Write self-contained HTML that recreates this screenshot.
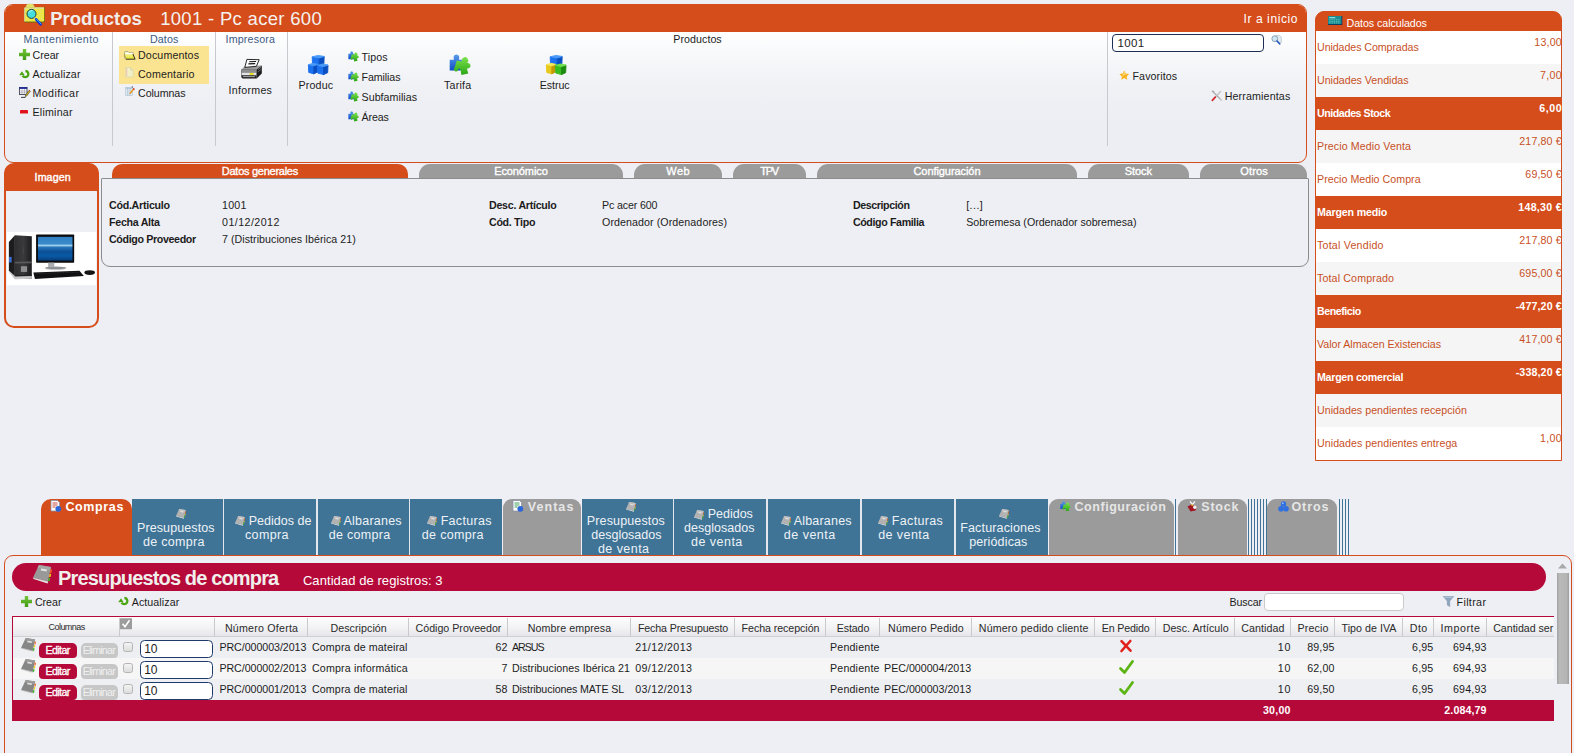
<!DOCTYPE html>
<html lang="es">
<head>
<meta charset="utf-8">
<title>Productos 1001 - Pc acer 600</title>
<style>
*{box-sizing:border-box;margin:0;padding:0}
html,body{width:1574px;height:753px;overflow:hidden;background:#eeeff4;font-family:"Liberation Sans",sans-serif;font-size:12px;color:#1c1c1c}
#root{position:relative;width:1574px;height:753px;overflow:hidden}
.b{position:absolute}
.t{position:absolute;white-space:nowrap}
svg{position:absolute;overflow:visible}
</style>
</head>
<body>
<div id="root">
<div class="b" style="left:4px;top:4px;width:1303px;height:159px;border:1px solid #d64d1c;border-radius:9px 9px 9px 9px;background:linear-gradient(#ffffff 28px,#f7f8fa 52px,#f0f1f5 82px,#edeef3 115px,#edeef3);overflow:hidden"><div class="b" style="left:0;top:0;width:1303px;height:27px;background:#d64d1c"></div></div>
<svg style="left:24px;top:4px" width="22" height="22" viewBox="0 0 22 22"><path d="M2 3.400q.200-3.200 1.800-3.400h4.600q1.400.200 2 3.400z" fill="#e6e45a" stroke="#c9c9b0" stroke-width=".5"/>
<rect x=".400" y="3.200" width="20.500" height="15.200" rx=".800" fill="#6e6d10"/>
<rect x=".400" y="3.200" width="19.700" height="14.400" rx=".800" fill="#eeea3e"/>
<path d="M.800 3.600h19v1h-19z" fill="#d8d8c8"/>
<path d="M.700 4v13.500" stroke="#d0d0c0" stroke-width=".8"/>
<g fill="#d6d39a"><circle cx="13.5" cy="6.500" r=".55"/><circle cx="15.7" cy="6.500" r=".55"/><circle cx="17.9" cy="6.500" r=".55"/><circle cx="14.6" cy="8.600" r=".55"/><circle cx="16.800" cy="8.600" r=".55"/><circle cx="13.5" cy="10.700" r=".55"/><circle cx="15.700" cy="10.700" r=".55"/><circle cx="17.900" cy="10.700" r=".55"/><circle cx="14.600" cy="12.800" r=".55"/><circle cx="16.800" cy="12.800" r=".55"/><circle cx="17.9" cy="14.900" r=".55"/><circle cx="3" cy="15" r=".55"/><circle cx="5.200" cy="16.100" r=".55"/><circle cx="2.2" cy="8" r=".55"/></g>
<circle cx="7.500" cy="9.900" r="4.500" fill="#45dede" stroke="#1d3b3b" stroke-width="1"/>
<path d="M4.600 8.800q1.400-2.600 4-2.300" stroke="#c8f8f8" stroke-width=".9" fill="none"/>
<path d="M10.700 13.600l1.600 1.700" stroke="#c8c8c8" stroke-width="1.600"/>
<path d="M12.200 15.300l4.600 5" stroke="#0b2bd8" stroke-width="2.600" stroke-linecap="round"/>
<path d="M12.600 15.200l4.300 4.700" stroke="#22d0ff" stroke-width=".9" stroke-linecap="round"/></svg>
<div class="t" style="top:8px;font-size:18.5px;line-height:21px;font-weight:bold;color:#f1efec;letter-spacing:0.02px;left:50.17px;">Productos</div>
<div class="t" style="top:8px;font-size:18.5px;line-height:21px;color:#f4f2ef;letter-spacing:0.31px;left:160.17px;">1001 - Pc acer 600</div>
<div class="t" style="top:12px;font-size:12px;line-height:14px;color:#fff;letter-spacing:0.60px;left:1243.46px;">Ir a inicio</div>
<div class="b" style="left:112px;top:32px;width:1px;height:114px;background:#c8c9cf;"></div>
<div class="b" style="left:215px;top:32px;width:1px;height:114px;background:#c8c9cf;"></div>
<div class="b" style="left:287px;top:32px;width:1px;height:114px;background:#c8c9cf;"></div>
<div class="b" style="left:1107px;top:32px;width:1px;height:114px;background:#c8c9cf;"></div>
<div class="t" style="top:33px;font-size:10.67px;line-height:12px;color:#3c5a84;letter-spacing:0.42px;left:23.52px;">Mantenimiento</div>
<svg style="left:19px;top:49px" width="11" height="11" viewBox="0 0 11 11"><defs><linearGradient id="pg" x1="0" y1="0" x2="0" y2="1"><stop offset="0" stop-color="#74c63a"/><stop offset="1" stop-color="#3f9a14"/></linearGradient></defs><path d="M3.800 0h3.400v3.800h3.800v3.400h-3.800v3.800h-3.400v-3.800h-3.800v-3.400h3.800z" fill="url(#pg)"/></svg>
<div class="t" style="top:49px;font-size:10.67px;line-height:12px;left:32.52px;">Crear</div>
<svg style="left:19px;top:68.5px" width="11" height="10.5" viewBox="0 0 11 10.5"><path d="M6.400 2A3.100 3.100 0 1 1 3.600 6.600" fill="none" stroke="#4aa512" stroke-width="2.300"/><path d="M3 2.200l2.500 3.800-5.300.300z" fill="#4aa512"/></svg>
<div class="t" style="top:68px;font-size:10.67px;line-height:12px;letter-spacing:0.13px;left:32.52px;">Actualizar</div>
<svg style="left:19px;top:87px" width="12" height="12" viewBox="0 0 12 12"><rect x=".500" y=".500" width="7.500" height="7" fill="#fff" stroke="#3a3a4a" stroke-width=".9"/><rect x=".300" y=".200" width="7.900" height="1.700" fill="#1c2a9a"/><path d="M.500 4h7.500M.500 5.800h7.500M3 2v5.500M5.500 2v5.500" stroke="#9a9aa8" stroke-width=".6"/><path d="M10.200 3.300l1 1-3.500 4.700-1.500.600.300-1.600z" fill="#e8c81a" stroke="#2a2a2a" stroke-width=".6"/><path d="M10.300 3.200l1 .900" stroke="#c0202a" stroke-width="1"/><path d="M2 10.400h4.500" stroke="#2a2a2a" stroke-width=".9"/></svg>
<div class="t" style="top:87px;font-size:10.67px;line-height:12px;letter-spacing:0.40px;left:32.52px;">Modificar</div>
<svg style="left:20.3px;top:110px" width="8" height="3.6" viewBox="0 0 8 3.6"><rect width="8" height="3.600" rx=".7" fill="#e2121c"/></svg>
<div class="t" style="top:106px;font-size:10.67px;line-height:12px;letter-spacing:0.21px;left:32.52px;">Eliminar</div>
<div class="t" style="top:33px;font-size:10.67px;line-height:12px;color:#3c5a84;letter-spacing:0.15px;left:149.92px;">Datos</div>
<div class="b" style="left:119px;top:46.2px;width:90px;height:37.5px;background:#fbe491;"></div>
<svg style="left:124px;top:50.6px" width="11.5" height="8.8" viewBox="0 0 11.5 8.8"><path d="M.600 7.500v-6.300q0-.700.700-.700h2.600l1 1.100h4.200v2" fill="#f4f2c0" stroke="#8a8a70" stroke-width=".6"/><path d="M1.400 1.900h7.300v2h-7.300z" fill="#fff"/><path d="M.300 3.400h8.700l2 4.700h-9z" fill="#e6e23a"/><path d="M1 4.600h7.600M1.500 5.800h8" stroke="#f6f4a0" stroke-width=".6"/><path d="M1.800 8.200h9.300l-2.100-5" fill="none" stroke="#1a1a1a" stroke-width=".9"/><path d="M.300 3.400l1.700 4.700" stroke="#7a7a30" stroke-width=".6"/></svg>
<div class="t" style="top:49px;font-size:10.67px;line-height:12px;letter-spacing:0.13px;left:138.02px;">Documentos</div>
<svg style="left:125.1px;top:67.2px" width="9" height="10.5" viewBox="0 0 9 10.5"><path d="M.600 .500h5l2.600 2.500v7h-7.600z" fill="#f3efc6" stroke="#dcd8a8" stroke-width=".8"/><path d="M5.600 .500v2.500h2.600" fill="#e6e2b4" stroke="#d2ce9c" stroke-width=".6"/><path d="M1.700 1v8.700" stroke="#ecc0b0" stroke-width=".9"/></svg>
<div class="t" style="top:68px;font-size:10.67px;line-height:12px;letter-spacing:0.15px;left:138.02px;">Comentario</div>
<svg style="left:124.8px;top:86.4px" width="10" height="10" viewBox="0 0 10 10"><rect x=".400" y="1.400" width="7" height="8.200" fill="#dfe9f2" stroke="#b4c4d4" stroke-width=".6"/><rect x=".400" y="1.400" width="7" height="1.600" fill="#b9cfe2"/><path d="M2.700 1.400v8.200M5 1.400v8.200" stroke="#a9bccf" stroke-width=".7"/><path d="M8.500 2.200l1 .900-3.600 4.300-1.400.500.400-1.400z" fill="#f2a722" stroke="#c9801a" stroke-width=".3"/><path d="M8.300 2.400l1.100 1" stroke="#d0202a" stroke-width="1.300"/><circle cx="7.300" cy=".900" r=".6" fill="#333"/></svg>
<div class="t" style="top:87px;font-size:10.67px;line-height:12px;letter-spacing:-0.07px;left:138.02px;">Columnas</div>
<div class="t" style="top:33px;font-size:10.67px;line-height:12px;color:#3c5a84;letter-spacing:0.19px;left:225.52px;">Impresora</div>
<svg style="left:241.1px;top:59px" width="21" height="20" viewBox="0 0 21 20"><path d="M.300 10.500l3.700-3.200 16.700-.800-5.200 4z" fill="#9c9c9c"/>
<path d="M15.500 10.500l5.300-4v8l-5.300 5.200z" fill="#1e1e1e"/>
<path d="M17 10.600l3-2.400M17 13l3-2.600" stroke="#8a8a8a" stroke-width=".7"/>
<path d="M.300 10.500h15.200v9h-13.700q-1.500-.300-1.500-2z" fill="#151515"/>
<path d="M.300 10.500h15.200v3.200h-15.200z" fill="#8e8e8e"/>
<path d="M.600 13.600h14.700v2.700h-14.700z" fill="#e4e4e6"/>
<path d="M8.600 14h4v1.900h-4z" fill="#e6de10"/>
<path d="M1.800 17.700h12.400" stroke="#c8c8c8" stroke-width=".9"/>
<path d="M5.900 .400l12.300.300-2.800 6.600-11.600 1.100z" fill="#fff" stroke="#111" stroke-width=".9"/>
<path d="M8.300 2.700l6.800-.200M7.400 4.900l6.800-.300" stroke="#111" stroke-width="1.100"/></svg>
<div class="t" style="top:84px;font-size:10.67px;line-height:12px;letter-spacing:0.28px;left:228.52px;">Informes</div>
<div class="t" style="top:33px;font-size:10.67px;line-height:12px;letter-spacing:0.05px;left:673.32px;">Productos</div>
<svg style="left:307.6px;top:54.6px" width="21" height="20.5" viewBox="0 0 21 20.5"><path d="M4.20 1.78L11.16 2.94L11.16 11.00L4.56 9.52z" fill="#1c72ee" stroke="#1c72ee" stroke-width=".9" stroke-linejoin="round"/><path d="M11.16 2.94L16.20 1.46L15.84 9.09L11.16 11.00z" fill="#0a4fc2" stroke="#0a4fc2" stroke-width=".9" stroke-linejoin="round"/><path d="M4.68 1.67L10.20 0.40L16.20 1.46L11.16 2.94z" fill="#4a9af8" stroke="#4a9af8" stroke-width=".9" stroke-linejoin="round"/><path d="M0.40 9.68L5.79 10.84L5.79 18.90L0.68 17.42z" fill="#1c72ee" stroke="#1c72ee" stroke-width=".9" stroke-linejoin="round"/><path d="M5.79 10.84L9.70 9.36L9.42 16.99L5.79 18.90z" fill="#0a4fc2" stroke="#0a4fc2" stroke-width=".9" stroke-linejoin="round"/><path d="M0.77 9.57L5.05 8.30L9.70 9.36L5.79 10.84z" fill="#4a9af8" stroke="#4a9af8" stroke-width=".9" stroke-linejoin="round"/><path d="M9.40 10.38L15.55 11.54L15.55 19.60L9.72 18.12z" fill="#1c72ee" stroke="#1c72ee" stroke-width=".9" stroke-linejoin="round"/><path d="M15.55 11.54L20.00 10.06L19.68 17.69L15.55 19.60z" fill="#0a4fc2" stroke="#0a4fc2" stroke-width=".9" stroke-linejoin="round"/><path d="M9.82 10.27L14.70 9.00L20.00 10.06L15.55 11.54z" fill="#4a9af8" stroke="#4a9af8" stroke-width=".9" stroke-linejoin="round"/></svg>
<div class="t" style="top:79px;font-size:10.67px;line-height:12px;letter-spacing:0.16px;left:298.52px;">Produc</div>
<svg style="left:348px;top:51px" width="10.7" height="10.7" viewBox="8.5 6 21.5 21.5"><defs><linearGradient id="pzb" x1="0" y1="0" x2="0" y2="1"><stop offset="0" stop-color="#5a9cec"/><stop offset="1" stop-color="#0f4cc6"/></linearGradient><linearGradient id="pzg" x1="0" y1="0" x2="0" y2="1"><stop offset="0" stop-color="#7ce24a"/><stop offset="1" stop-color="#2aa516"/></linearGradient></defs>
<path d="M9.200 11.700h4.200q-1.300-4.800 2.500-5.100 3.800.300 2.500 5.100h2.900v10.900h-12.100z" fill="url(#pzb)"/>
<path d="M16.300 12.400L21.500 13.600A3.200 3.200 0 1 1 26.800 14.600L27.200 15A2.700 2.700 0 1 1 26.300 20.200L27.800 25.400L21 26.900L20.300 24A2.600 2.600 0 0 0 18 20.600L17.500 22.800A2.400 2.400 0 1 1 14.200 19.200z" fill="url(#pzg)"/></svg>
<div class="t" style="top:51px;font-size:10.67px;line-height:12px;letter-spacing:0.07px;left:361.52px;">Tipos</div>
<svg style="left:348px;top:71px" width="10.7" height="10.7" viewBox="8.5 6 21.5 21.5"><defs><linearGradient id="pzb" x1="0" y1="0" x2="0" y2="1"><stop offset="0" stop-color="#5a9cec"/><stop offset="1" stop-color="#0f4cc6"/></linearGradient><linearGradient id="pzg" x1="0" y1="0" x2="0" y2="1"><stop offset="0" stop-color="#7ce24a"/><stop offset="1" stop-color="#2aa516"/></linearGradient></defs>
<path d="M9.200 11.700h4.200q-1.300-4.800 2.500-5.100 3.800.300 2.500 5.100h2.900v10.900h-12.100z" fill="url(#pzb)"/>
<path d="M16.300 12.400L21.500 13.600A3.200 3.200 0 1 1 26.800 14.600L27.200 15A2.700 2.700 0 1 1 26.300 20.200L27.800 25.400L21 26.900L20.300 24A2.600 2.600 0 0 0 18 20.600L17.500 22.800A2.400 2.400 0 1 1 14.200 19.200z" fill="url(#pzg)"/></svg>
<div class="t" style="top:71px;font-size:10.67px;line-height:12px;letter-spacing:-0.10px;left:361.52px;">Familias</div>
<svg style="left:348px;top:91px" width="10.7" height="10.7" viewBox="8.5 6 21.5 21.5"><defs><linearGradient id="pzb" x1="0" y1="0" x2="0" y2="1"><stop offset="0" stop-color="#5a9cec"/><stop offset="1" stop-color="#0f4cc6"/></linearGradient><linearGradient id="pzg" x1="0" y1="0" x2="0" y2="1"><stop offset="0" stop-color="#7ce24a"/><stop offset="1" stop-color="#2aa516"/></linearGradient></defs>
<path d="M9.200 11.700h4.200q-1.300-4.800 2.500-5.100 3.800.300 2.500 5.100h2.900v10.900h-12.100z" fill="url(#pzb)"/>
<path d="M16.300 12.400L21.500 13.600A3.200 3.200 0 1 1 26.800 14.600L27.200 15A2.700 2.700 0 1 1 26.300 20.200L27.800 25.400L21 26.900L20.300 24A2.600 2.600 0 0 0 18 20.600L17.500 22.800A2.400 2.400 0 1 1 14.200 19.200z" fill="url(#pzg)"/></svg>
<div class="t" style="top:91px;font-size:10.67px;line-height:12px;letter-spacing:0.04px;left:361.52px;">Subfamilias</div>
<svg style="left:348px;top:111px" width="10.7" height="10.7" viewBox="8.5 6 21.5 21.5"><defs><linearGradient id="pzb" x1="0" y1="0" x2="0" y2="1"><stop offset="0" stop-color="#5a9cec"/><stop offset="1" stop-color="#0f4cc6"/></linearGradient><linearGradient id="pzg" x1="0" y1="0" x2="0" y2="1"><stop offset="0" stop-color="#7ce24a"/><stop offset="1" stop-color="#2aa516"/></linearGradient></defs>
<path d="M9.200 11.700h4.200q-1.300-4.800 2.500-5.100 3.800.300 2.500 5.100h2.900v10.900h-12.100z" fill="url(#pzb)"/>
<path d="M16.300 12.400L21.500 13.600A3.200 3.200 0 1 1 26.800 14.600L27.200 15A2.700 2.700 0 1 1 26.300 20.200L27.800 25.400L21 26.900L20.300 24A2.600 2.600 0 0 0 18 20.600L17.500 22.800A2.400 2.400 0 1 1 14.200 19.200z" fill="url(#pzg)"/></svg>
<div class="t" style="top:111px;font-size:10.67px;line-height:12px;letter-spacing:-0.10px;left:361.52px;">Áreas</div>
<svg style="left:448.5px;top:54px" width="21.5" height="21.5" viewBox="8.5 6 21.5 21.5"><defs><linearGradient id="pzb" x1="0" y1="0" x2="0" y2="1"><stop offset="0" stop-color="#5a9cec"/><stop offset="1" stop-color="#0f4cc6"/></linearGradient><linearGradient id="pzg" x1="0" y1="0" x2="0" y2="1"><stop offset="0" stop-color="#7ce24a"/><stop offset="1" stop-color="#2aa516"/></linearGradient></defs>
<path d="M9.200 11.700h4.200q-1.300-4.800 2.500-5.100 3.800.300 2.500 5.100h2.900v10.900h-12.100z" fill="url(#pzb)"/>
<path d="M16.300 12.400L21.500 13.600A3.200 3.200 0 1 1 26.800 14.600L27.200 15A2.700 2.700 0 1 1 26.300 20.200L27.800 25.400L21 26.900L20.300 24A2.600 2.600 0 0 0 18 20.600L17.500 22.800A2.400 2.400 0 1 1 14.200 19.200z" fill="url(#pzg)"/></svg>
<div class="t" style="top:79px;font-size:10.67px;line-height:12px;letter-spacing:0.26px;left:443.92px;">Tarifa</div>
<svg style="left:546.2px;top:54.6px" width="21" height="20.5" viewBox="0 0 21 20.5"><path d="M4.20 1.78L11.16 2.94L11.16 11.00L4.56 9.52z" fill="#1c72ee" stroke="#1c72ee" stroke-width=".9" stroke-linejoin="round"/><path d="M11.16 2.94L16.20 1.46L15.84 9.09L11.16 11.00z" fill="#0a4fc2" stroke="#0a4fc2" stroke-width=".9" stroke-linejoin="round"/><path d="M4.68 1.67L10.20 0.40L16.20 1.46L11.16 2.94z" fill="#4a9af8" stroke="#4a9af8" stroke-width=".9" stroke-linejoin="round"/><path d="M0.40 9.68L5.79 10.84L5.79 18.90L0.68 17.42z" fill="#e8c81c" stroke="#e8c81c" stroke-width=".9" stroke-linejoin="round"/><path d="M5.79 10.84L9.70 9.36L9.42 16.99L5.79 18.90z" fill="#c49808" stroke="#c49808" stroke-width=".9" stroke-linejoin="round"/><path d="M0.77 9.57L5.05 8.30L9.70 9.36L5.79 10.84z" fill="#f6e85a" stroke="#f6e85a" stroke-width=".9" stroke-linejoin="round"/><path d="M9.40 10.38L15.55 11.54L15.55 19.60L9.72 18.12z" fill="#38bc20" stroke="#38bc20" stroke-width=".9" stroke-linejoin="round"/><path d="M15.55 11.54L20.00 10.06L19.68 17.69L15.55 19.60z" fill="#1c8a10" stroke="#1c8a10" stroke-width=".9" stroke-linejoin="round"/><path d="M9.82 10.27L14.70 9.00L20.00 10.06L15.55 11.54z" fill="#6fe04a" stroke="#6fe04a" stroke-width=".9" stroke-linejoin="round"/></svg>
<div class="t" style="top:79px;font-size:10.67px;line-height:12px;letter-spacing:-0.05px;left:539.72px;">Estruc</div>
<div class="b" style="left:1112px;top:33.5px;width:152px;height:18.5px;border:1.5px solid #1d2f55;border-radius:4px;background:#fff"></div>
<div class="t" style="top:37px;font-size:11.5px;line-height:12px;letter-spacing:0.35px;left:1117.48px;">1001</div>
<svg style="left:1271.3px;top:34.6px" width="11" height="10" viewBox="0 0 11 10"><path d="M4.500 .400h4l1.800 1.800v5.300h-3z" fill="#e4ebf0" stroke="#a9b6c0" stroke-width=".6"/><circle cx="3.800" cy="3.700" r="2.900" fill="#cfe6f2" stroke="#7f9aae" stroke-width=".9"/><path d="M6 6l2.800 3" stroke="#2456c0" stroke-width="1.600" stroke-linecap="round"/></svg>
<svg style="left:1119.2px;top:69.8px" width="10.5" height="10" viewBox="0 0 12 11"><path d="M6 .300l1.700 3.600 3.900.500-2.900 2.700.800 3.900-3.500-2-3.500 2 .800-3.900-2.900-2.700 3.900-.500z" fill="#f9b21a"/><path d="M6 1.500l1 2.600 2.400.400-3.400.600-2.600 3z" fill="#fde9a8" opacity=".8"/></svg>
<div class="t" style="top:70px;font-size:10.67px;line-height:12px;letter-spacing:0.09px;left:1132.52px;">Favoritos</div>
<svg style="left:1211.3px;top:89.5px" width="11" height="11" viewBox="0 0 11 11"><path d="M1.800 1.600l7.800 7.800" stroke="#a4a4a4" stroke-width="1.300" stroke-linecap="round"/><path d="M10 1.200l-6 6.300" stroke="#bdbdbd" stroke-width="1.200"/><path d="M4.300 7.200l-3 3.200" stroke="#d4262e" stroke-width="1.700" stroke-linecap="round"/><path d="M.800 1.200q1.600-.900 2.400.800" fill="none" stroke="#9a9a9a" stroke-width=".9"/><path d="M9.300 9l1 1.200" stroke="#c8c8c8" stroke-width="1.600" stroke-linecap="round"/></svg>
<div class="t" style="top:90px;font-size:10.67px;line-height:12px;letter-spacing:0.14px;left:1224.72px;">Herramientas</div>
<div class="b" style="left:4px;top:163px;width:95.200px;height:165px;border:2.100px solid #d64d1c;border-radius:10px;background:linear-gradient(#d64d1c 25.900px,#eeeff4 25.900px);background-clip:border-box"></div>
<div class="t" style="top:171px;font-size:10.67px;line-height:12px;color:#fff;letter-spacing:0.10px;left:-447.35px;width:1000px;text-align:center;-webkit-text-stroke:.4px #fff;">Imagen</div>
<svg style="left:6.970px;top:231.700px" width="89.200" height="53.250" viewBox="75 72 960 573">
<defs><linearGradient id="scr" x1="0" y1="0" x2="0" y2="1"><stop offset="0" stop-color="#2f7fc2"/><stop offset=".3" stop-color="#3a8bcb"/><stop offset=".36" stop-color="#a8d6f0"/><stop offset=".43" stop-color="#2c78bd"/><stop offset=".62" stop-color="#0b4f96"/><stop offset=".8" stop-color="#0a5aa6"/><stop offset="1" stop-color="#063c78"/></linearGradient>
<linearGradient id="twr" x1="0" y1="0" x2="1" y2="0"><stop offset="0" stop-color="#2e2e30"/><stop offset=".5" stop-color="#3a3a3d"/><stop offset="1" stop-color="#1b1b1d"/></linearGradient></defs>
<rect x="75" y="72" width="960" height="573" fill="#fff"/>
<path d="M95 180L160 108V578L95 492z" fill="#1c1c1e"/>
<path d="M160 108L342 118V572L160 578z" fill="url(#twr)"/>
<path d="M97 340h28v60h-28z" fill="#3b6fd6"/>
<path d="M160 392L342 390V408L160 412z" fill="#5a5a5e"/>
<path d="M225 440h66v62h-66z" fill="#8d8d90"/>
<path d="M250 235v70" stroke="#555" stroke-width="5"/>
<path d="M160 545L342 540V572L160 582L98 500V488z" fill="#d8d8da" opacity=".9"/>
<path d="M160 535L342 530V545L160 552z" fill="#222"/>
<rect x="388" y="100" width="410" height="302" rx="8" fill="#0c0c0e"/>
<rect x="408" y="124" width="372" height="256" fill="url(#scr)"/>
<path d="M518 402h66v46h-66z" fill="#a9acb0"/>
<ellipse cx="598" cy="462" rx="118" ry="19" fill="#c2c5c8"/>
<ellipse cx="598" cy="458" rx="110" ry="12" fill="#8e9195"/>
<path d="M358 507L855 490L902 545L376 577z" fill="#111113"/>
<path d="M390 520L850 504" stroke="#333" stroke-width="8" stroke-dasharray="10 6"/>
<ellipse cx="965" cy="509" rx="57" ry="25" fill="#151517"/>
</svg>
<div class="b" style="left:112px;top:163.7px;width:296px;height:14.8px;background:#d64d1c;border-radius:10px 10px 0 0;"></div>
<div class="t" style="top:165px;font-size:11px;line-height:12px;color:#fff;letter-spacing:-0.27px;left:-240.13px;width:1000px;text-align:center;-webkit-text-stroke:.35px #fff;">Datos generales</div>
<div class="b" style="left:419px;top:163.7px;width:204px;height:14.8px;background:#9b9b9b;border-radius:11px 11px 0 0;"></div>
<div class="t" style="top:165px;font-size:11px;line-height:12px;color:#fff;letter-spacing:-0.10px;left:20.95px;width:1000px;text-align:center;-webkit-text-stroke:.35px #fff;">Económico</div>
<div class="b" style="left:634px;top:163.7px;width:88px;height:14.8px;background:#9b9b9b;border-radius:11px 11px 0 0;"></div>
<div class="t" style="top:165px;font-size:11px;line-height:12px;color:#fff;letter-spacing:0.48px;left:178.24px;width:1000px;text-align:center;-webkit-text-stroke:.35px #fff;">Web</div>
<div class="b" style="left:733px;top:163.7px;width:73px;height:14.8px;background:#9b9b9b;border-radius:11px 11px 0 0;"></div>
<div class="t" style="top:165px;font-size:11px;line-height:12px;color:#fff;letter-spacing:-1.21px;left:269.1px;width:1000px;text-align:center;-webkit-text-stroke:.35px #fff;">TPV</div>
<div class="b" style="left:817px;top:163.7px;width:260px;height:14.8px;background:#9b9b9b;border-radius:11px 11px 0 0;"></div>
<div class="t" style="top:165px;font-size:11px;line-height:12px;color:#fff;letter-spacing:-0.07px;left:446.96px;width:1000px;text-align:center;-webkit-text-stroke:.35px #fff;">Configuración</div>
<div class="b" style="left:1088px;top:163.7px;width:101px;height:14.8px;background:#9b9b9b;border-radius:11px 11px 0 0;"></div>
<div class="t" style="top:165px;font-size:11px;line-height:12px;color:#fff;letter-spacing:-0.06px;left:638.37px;width:1000px;text-align:center;-webkit-text-stroke:.35px #fff;">Stock</div>
<div class="b" style="left:1199.5px;top:163.7px;width:107.5px;height:14.8px;background:#9b9b9b;border-radius:11px 11px 0 0;"></div>
<div class="t" style="top:165px;font-size:11px;line-height:12px;color:#fff;letter-spacing:0.10px;left:754.05px;width:1000px;text-align:center;-webkit-text-stroke:.35px #fff;">Otros</div>
<div class="b" style="left:101px;top:178px;width:1208px;height:88.500px;border:1px solid #8c8c8c;border-radius:1px 1px 9px 9px"></div>
<div class="t" style="top:199px;font-size:10.67px;line-height:12px;font-weight:bold;letter-spacing:-0.27px;left:109.02px;">Cód.Articulo</div>
<div class="t" style="top:199px;font-size:10.67px;line-height:12px;letter-spacing:0.25px;left:222.02px;">1001</div>
<div class="t" style="top:216px;font-size:10.67px;line-height:12px;font-weight:bold;letter-spacing:-0.28px;left:109.02px;">Fecha Alta</div>
<div class="t" style="top:216px;font-size:10.67px;line-height:12px;letter-spacing:0.44px;left:222.02px;">01/12/2012</div>
<div class="t" style="top:233px;font-size:10.67px;line-height:12px;font-weight:bold;letter-spacing:-0.35px;left:109.02px;">Código Proveedor</div>
<div class="t" style="top:233px;font-size:10.67px;line-height:12px;letter-spacing:0.04px;left:222.02px;">7 (Distribuciones Ibérica 21)</div>
<div class="t" style="top:199px;font-size:10.67px;line-height:12px;font-weight:bold;letter-spacing:-0.27px;left:489.02px;">Desc. Artículo</div>
<div class="t" style="top:199px;font-size:10.67px;line-height:12px;letter-spacing:-0.14px;left:602.02px;">Pc acer 600</div>
<div class="t" style="top:216px;font-size:10.67px;line-height:12px;font-weight:bold;letter-spacing:-0.31px;left:489.02px;">Cód. Tipo</div>
<div class="t" style="top:216px;font-size:10.67px;line-height:12px;letter-spacing:0.08px;left:602.02px;">Ordenador (Ordenadores)</div>
<div class="t" style="top:199px;font-size:10.67px;line-height:12px;font-weight:bold;letter-spacing:-0.40px;left:852.92px;">Descripción</div>
<div class="t" style="top:199px;font-size:10.67px;line-height:12px;letter-spacing:0.44px;left:966.22px;">[...]</div>
<div class="t" style="top:216px;font-size:10.67px;line-height:12px;font-weight:bold;letter-spacing:-0.37px;left:852.92px;">Código Familia</div>
<div class="t" style="top:216px;font-size:10.67px;line-height:12px;letter-spacing:-0.03px;left:966.22px;">Sobremesa (Ordenador sobremesa)</div>
<div class="b" style="left:1315px;top:11px;width:247px;height:450px;border:1px solid #d64d1c;border-radius:9px 9px 0 0;background:#d64d1c;overflow:hidden"><div class="b" style="left:0;top:18.7px;width:245px;height:33.3px;background:#ffffff"></div><div class="b" style="left:0;top:51.7px;width:245px;height:33.3px;background:#f5f5f5"></div><div class="b" style="left:0;top:84.7px;width:245px;height:33.3px;background:#d64d1c"></div><div class="b" style="left:0;top:117.7px;width:245px;height:33.3px;background:#f5f5f5"></div><div class="b" style="left:0;top:150.7px;width:245px;height:33.3px;background:#ffffff"></div><div class="b" style="left:0;top:183.7px;width:245px;height:33.3px;background:#d64d1c"></div><div class="b" style="left:0;top:216.7px;width:245px;height:33.3px;background:#ffffff"></div><div class="b" style="left:0;top:249.7px;width:245px;height:33.3px;background:#f5f5f5"></div><div class="b" style="left:0;top:282.7px;width:245px;height:33.3px;background:#d64d1c"></div><div class="b" style="left:0;top:315.7px;width:245px;height:33.3px;background:#f5f5f5"></div><div class="b" style="left:0;top:348.7px;width:245px;height:33.3px;background:#d64d1c"></div><div class="b" style="left:0;top:381.7px;width:245px;height:33.3px;background:#f5f5f5"></div><div class="b" style="left:0;top:414.7px;width:245px;height:33.3px;background:#ffffff"></div></div>
<svg style="left:1327.7px;top:15.8px" width="14.3" height="9" viewBox="0 0 14.3 9"><rect width="14.300" height="9" fill="#0c2a5a"/><rect width="13.500" height="8.200" fill="#1b8c92"/><rect x="1.300" y="1" width="6" height="1.300" fill="#8fdcd6"/><path d="M1.300 3.700h11M1.300 5.300h11M1.300 6.900h11" stroke="#6cc8c4" stroke-width=".8" stroke-dasharray="1.400 .8"/></svg>
<div class="t" style="top:17px;font-size:10.67px;line-height:12px;color:#fff;letter-spacing:-0.05px;left:1346.52px;">Datos calculados</div>
<div class="t" style="top:41px;font-size:10.67px;line-height:12px;color:#c8501f;letter-spacing:-0.08px;left:1317.02px;">Unidades Compradas</div>
<div class="t" style="top:36px;font-size:10.67px;line-height:12px;color:#c8501f;letter-spacing:0.17px;right:12.15px;">13,00</div>
<div class="t" style="top:74px;font-size:10.67px;line-height:12px;color:#c8501f;letter-spacing:-0.02px;left:1317.02px;">Unidades Vendidas</div>
<div class="t" style="top:69px;font-size:10.67px;line-height:12px;color:#c8501f;letter-spacing:0.30px;right:12.02px;">7,00</div>
<div class="t" style="top:107px;font-size:10.67px;line-height:12px;font-weight:bold;color:#fff;letter-spacing:-0.49px;left:1317.02px;">Unidades Stock</div>
<div class="t" style="top:102px;font-size:10.67px;line-height:12px;font-weight:bold;color:#fff;letter-spacing:0.57px;right:11.75px;">6,00</div>
<div class="t" style="top:140px;font-size:10.67px;line-height:12px;color:#c8501f;letter-spacing:0.09px;left:1317.02px;">Precio Medio Venta</div>
<div class="t" style="top:135px;font-size:10.67px;line-height:12px;color:#c8501f;letter-spacing:0.13px;right:12.19px;">217,80 €</div>
<div class="t" style="top:173px;font-size:10.67px;line-height:12px;color:#c8501f;letter-spacing:0.03px;left:1317.02px;">Precio Medio Compra</div>
<div class="t" style="top:168px;font-size:10.67px;line-height:12px;color:#c8501f;letter-spacing:0.13px;right:12.19px;">69,50 €</div>
<div class="t" style="top:206px;font-size:10.67px;line-height:12px;font-weight:bold;color:#fff;letter-spacing:-0.17px;left:1317.02px;">Margen medio</div>
<div class="t" style="top:201px;font-size:10.67px;line-height:12px;font-weight:bold;color:#fff;letter-spacing:0.28px;right:12.04px;">148,30 €</div>
<div class="t" style="top:239px;font-size:10.67px;line-height:12px;color:#c8501f;letter-spacing:0.21px;left:1317.02px;">Total Vendido</div>
<div class="t" style="top:234px;font-size:10.67px;line-height:12px;color:#c8501f;letter-spacing:0.13px;right:12.19px;">217,80 €</div>
<div class="t" style="top:272px;font-size:10.67px;line-height:12px;color:#c8501f;letter-spacing:0.13px;left:1317.02px;">Total Comprado</div>
<div class="t" style="top:267px;font-size:10.67px;line-height:12px;color:#c8501f;letter-spacing:0.13px;right:12.19px;">695,00 €</div>
<div class="t" style="top:305px;font-size:10.67px;line-height:12px;font-weight:bold;color:#fff;letter-spacing:-0.46px;left:1317.02px;">Beneficio</div>
<div class="t" style="top:300px;font-size:10.67px;line-height:12px;font-weight:bold;color:#fff;letter-spacing:0.12px;right:12.2px;">-477,20 €</div>
<div class="t" style="top:338px;font-size:10.67px;line-height:12px;color:#c8501f;letter-spacing:-0.03px;left:1317.02px;">Valor Almacen Existencias</div>
<div class="t" style="top:333px;font-size:10.67px;line-height:12px;color:#c8501f;letter-spacing:0.13px;right:12.19px;">417,00 €</div>
<div class="t" style="top:371px;font-size:10.67px;line-height:12px;font-weight:bold;color:#fff;letter-spacing:-0.28px;left:1317.02px;">Margen comercial</div>
<div class="t" style="top:366px;font-size:10.67px;line-height:12px;font-weight:bold;color:#fff;letter-spacing:0.12px;right:12.2px;">-338,20 €</div>
<div class="t" style="top:404px;font-size:10.67px;line-height:12px;color:#c8501f;letter-spacing:0.02px;left:1317.02px;">Unidades pendientes recepción</div>
<div class="t" style="top:437px;font-size:10.67px;line-height:12px;color:#c8501f;letter-spacing:0.04px;left:1317.02px;">Unidades pendientes entrega</div>
<div class="t" style="top:432px;font-size:10.67px;line-height:12px;color:#c8501f;letter-spacing:0.30px;right:12.02px;">1,00</div>
<div class="b" style="left:4px;top:555px;width:1568px;height:230px;border:1px solid #d64d1c;border-radius:9px 9px 0 0"></div>
<div class="b" style="left:131.6px;top:499px;width:370.20000000000005px;height:56px;background:#3f7496;"></div>
<div class="b" style="left:582px;top:499px;width:465.70000000000005px;height:56px;background:#3f7496;"></div>
<div class="b" style="left:222.6px;top:499px;width:1.7px;height:56px;background:#e3e6ec;"></div>
<div class="b" style="left:315.9px;top:499px;width:1.7px;height:56px;background:#e3e6ec;"></div>
<div class="b" style="left:408.8px;top:499px;width:1.7px;height:56px;background:#e3e6ec;"></div>
<div class="b" style="left:672.7px;top:499px;width:1.7px;height:56px;background:#e3e6ec;"></div>
<div class="b" style="left:766px;top:499px;width:1.7px;height:56px;background:#e3e6ec;"></div>
<div class="b" style="left:860px;top:499px;width:1.7px;height:56px;background:#e3e6ec;"></div>
<div class="b" style="left:954.4px;top:499px;width:1.7px;height:56px;background:#e3e6ec;"></div>
<div class="b" style="left:41px;top:499px;width:90.6px;height:56px;background:#d64d1c;border-radius:10px 10px 0 0;"></div>
<div class="b" style="left:503.3px;top:499px;width:78.2px;height:56px;background:#9b9b9b;border-radius:9px 9px 0 0;"></div>
<div class="b" style="left:1049.4px;top:499px;width:124.8px;height:56px;background:#9b9b9b;border-radius:9px 9px 0 0;"></div>
<div class="b" style="left:1175.4px;top:499px;width:1px;height:56px;background:#3f7496;"></div>
<div class="b" style="left:1177.5px;top:499px;width:69.1px;height:56px;background:#9b9b9b;border-radius:9px 9px 0 0;"></div>
<div class="b" style="left:1247.9px;top:499px;width:1.1px;height:56px;background:#3f7496;"></div>
<div class="b" style="left:1251px;top:499px;width:1.1px;height:56px;background:#3f7496;"></div>
<div class="b" style="left:1254px;top:499px;width:1.1px;height:56px;background:#3f7496;"></div>
<div class="b" style="left:1256.9px;top:499px;width:1.1px;height:56px;background:#3f7496;"></div>
<div class="b" style="left:1259.8px;top:499px;width:1.1px;height:56px;background:#3f7496;"></div>
<div class="b" style="left:1262.8px;top:499px;width:1.1px;height:56px;background:#3f7496;"></div>
<div class="b" style="left:1265.6px;top:499px;width:1.1px;height:56px;background:#3f7496;"></div>
<div class="b" style="left:1267.4px;top:499px;width:69.9px;height:56px;background:#9b9b9b;border-radius:9px 9px 0 0;"></div>
<div class="b" style="left:1338.8px;top:499px;width:1.1px;height:56px;background:#3f7496;"></div>
<div class="b" style="left:1341.8px;top:499px;width:1.1px;height:56px;background:#3f7496;"></div>
<div class="b" style="left:1344.8px;top:499px;width:1.1px;height:56px;background:#3f7496;"></div>
<div class="b" style="left:1347.6px;top:499px;width:1.8px;height:56px;background:#3f7496;"></div>
<svg style="left:50.2px;top:500px" width="12" height="12" viewBox="0 0 12 12"><path d="M1 .500h6.500l2 2v8.500h-8.500z" fill="#fff" stroke="#8c93a8" stroke-width=".8"/><path d="M2.500 3h5M2.500 5h5M2.500 7h3" stroke="#c0392b" stroke-width=".9"/><circle cx="8.300" cy="8.800" r="2.900" fill="#2a66d8"/></svg>
<div class="t" style="top:500px;font-size:12.5px;line-height:14px;font-weight:bold;color:#fff;letter-spacing:0.62px;left:65.44px;">Compras</div>
<svg style="left:512.3px;top:500px" width="12" height="12" viewBox="0 0 12 12"><path d="M1 .500h6.500l2 2v8.500h-8.500z" fill="#fff" stroke="#8c93a8" stroke-width=".8"/><path d="M2.500 3h5M2.500 5h5M2.500 7h3" stroke="#2e9a48" stroke-width=".9"/><circle cx="8.300" cy="8.800" r="2.900" fill="#2a66d8"/></svg>
<div class="t" style="top:500px;font-size:12.5px;line-height:14px;font-weight:bold;color:#e6e6e6;letter-spacing:1.06px;left:527.74px;">Ventas</div>
<svg style="left:1060px;top:501px" width="10.5" height="10.5" viewBox="8.5 6 21.5 21.5"><defs><linearGradient id="pzb" x1="0" y1="0" x2="0" y2="1"><stop offset="0" stop-color="#5a9cec"/><stop offset="1" stop-color="#0f4cc6"/></linearGradient><linearGradient id="pzg" x1="0" y1="0" x2="0" y2="1"><stop offset="0" stop-color="#7ce24a"/><stop offset="1" stop-color="#2aa516"/></linearGradient></defs>
<path d="M9.200 11.700h4.200q-1.300-4.800 2.500-5.100 3.800.300 2.500 5.100h2.900v10.900h-12.100z" fill="url(#pzb)"/>
<path d="M16.300 12.400L21.500 13.600A3.200 3.200 0 1 1 26.800 14.600L27.200 15A2.700 2.700 0 1 1 26.300 20.200L27.800 25.400L21 26.900L20.300 24A2.600 2.600 0 0 0 18 20.600L17.500 22.800A2.400 2.400 0 1 1 14.200 19.200z" fill="url(#pzg)"/></svg>
<div class="t" style="top:500px;font-size:12.5px;line-height:14px;font-weight:bold;color:#e6e6e6;letter-spacing:0.56px;left:1074.44px;">Configuración</div>
<svg style="left:1187.4px;top:501px" width="11" height="11" viewBox="0 0 11 11"><path d="M3 .500l2.500 3 2.500-3" stroke="#f4f4f4" stroke-width="1.200" fill="none"/><path d="M.500 5.500l4-2 5 2.500-1 3.500-5 1z" fill="#a01622"/><circle cx="7.800" cy="6.300" r="1.700" fill="#f2f2f2"/><path d="M4.500 3.600l1.200 1.200" stroke="#f0c020" stroke-width="1.400"/></svg>
<div class="t" style="top:500px;font-size:12.5px;line-height:14px;font-weight:bold;color:#e6e6e6;letter-spacing:0.77px;left:1201.34px;">Stock</div>
<svg style="left:1278px;top:501px" width="11" height="11" viewBox="0 0 11 11"><circle cx="5.500" cy="3" r="2.700" fill="#2f6fe0"/><circle cx="3" cy="7.800" r="2.800" fill="#2f6fe0"/><circle cx="8" cy="7.800" r="2.800" fill="#2f6fe0"/><circle cx="4.800" cy="2.300" r="1" fill="#8bb6ff"/></svg>
<div class="t" style="top:500px;font-size:12.5px;line-height:14px;font-weight:bold;color:#e6e6e6;letter-spacing:0.95px;left:1291.44px;">Otros</div>
<svg style="left:175.5px;top:509px" width="10.2" height="9.93" viewBox="0 0 19 18.500"><path d="M.100 12.500l14.900 3.800-.300 2.100-14.100-4.400z" fill="#ececec"/>
<path d="M.100 12.500l14.900 3.800-.100.800-14.900-3.900z" fill="#bdbdbd"/>
<path d="M6 0l11.900 1.900-2.900 14.400-14.900-3.800z" fill="#b2b2b2"/>
<path d="M6 0l11.900 1.900-.700 3.500-12.600-2.700z" fill="#c2c2c2"/>
<path d="M8.100 3.500l5.800.900-.300 2-5.700-.900z" fill="#e4e4e4"/>
<path d="M17.500 4.300l1.500.300-.700 3.600-1.500-.300z" fill="#f0641e"/>
<path d="M16.600 8.800l1.600.300-.700 3-1.600-.300z" fill="#ecd21c"/>
<path d="M15.600 12.800l1.600.300-.700 3.300-1.600-.300z" fill="#3fb52a"/></svg>
<div class="t" style="top:521px;font-size:12.5px;line-height:14px;color:#eef2f6;letter-spacing:0.11px;left:136.94px;">Presupuestos</div>
<div class="t" style="top:535px;font-size:12.5px;line-height:14px;color:#eef2f6;letter-spacing:0.28px;left:143.04px;">de compra</div>
<svg style="left:235.3px;top:516px" width="10.2" height="9.93" viewBox="0 0 19 18.500"><path d="M.100 12.500l14.900 3.800-.300 2.100-14.100-4.400z" fill="#ececec"/>
<path d="M.100 12.500l14.900 3.800-.100.800-14.900-3.900z" fill="#bdbdbd"/>
<path d="M6 0l11.900 1.900-2.900 14.400-14.900-3.800z" fill="#b2b2b2"/>
<path d="M6 0l11.900 1.900-.700 3.500-12.600-2.700z" fill="#c2c2c2"/>
<path d="M8.100 3.500l5.800.900-.300 2-5.700-.900z" fill="#e4e4e4"/>
<path d="M17.500 4.300l1.500.300-.700 3.600-1.500-.300z" fill="#f0641e"/>
<path d="M16.600 8.800l1.600.300-.700 3-1.600-.300z" fill="#ecd21c"/>
<path d="M15.600 12.800l1.600.300-.700 3.300-1.600-.300z" fill="#3fb52a"/></svg>
<div class="t" style="top:514px;font-size:12.5px;line-height:14px;color:#eef2f6;letter-spacing:0.03px;left:248.74px;">Pedidos de</div>
<div class="t" style="top:528px;font-size:12.5px;line-height:14px;color:#eef2f6;letter-spacing:0.39px;left:244.94px;">compra</div>
<svg style="left:330.6px;top:516px" width="10.2" height="9.93" viewBox="0 0 19 18.500"><path d="M.100 12.500l14.900 3.800-.300 2.100-14.100-4.400z" fill="#ececec"/>
<path d="M.100 12.500l14.900 3.800-.100.800-14.900-3.900z" fill="#bdbdbd"/>
<path d="M6 0l11.900 1.900-2.900 14.400-14.900-3.800z" fill="#b2b2b2"/>
<path d="M6 0l11.900 1.900-.700 3.500-12.600-2.700z" fill="#c2c2c2"/>
<path d="M8.100 3.500l5.800.900-.300 2-5.700-.900z" fill="#e4e4e4"/>
<path d="M17.500 4.300l1.500.300-.700 3.600-1.500-.300z" fill="#f0641e"/>
<path d="M16.600 8.800l1.600.300-.700 3-1.600-.300z" fill="#ecd21c"/>
<path d="M15.600 12.800l1.600.300-.700 3.300-1.600-.300z" fill="#3fb52a"/></svg>
<div class="t" style="top:514px;font-size:12.5px;line-height:14px;color:#eef2f6;letter-spacing:0.23px;left:343.44px;">Albaranes</div>
<div class="t" style="top:528px;font-size:12.5px;line-height:14px;color:#eef2f6;letter-spacing:0.28px;left:328.84px;">de compra</div>
<svg style="left:426.7px;top:516px" width="10.2" height="9.93" viewBox="0 0 19 18.500"><path d="M.100 12.500l14.900 3.800-.300 2.100-14.100-4.400z" fill="#ececec"/>
<path d="M.100 12.500l14.900 3.800-.100.800-14.900-3.900z" fill="#bdbdbd"/>
<path d="M6 0l11.900 1.900-2.900 14.400-14.900-3.800z" fill="#b2b2b2"/>
<path d="M6 0l11.900 1.900-.700 3.500-12.600-2.700z" fill="#c2c2c2"/>
<path d="M8.100 3.500l5.800.900-.300 2-5.700-.900z" fill="#e4e4e4"/>
<path d="M17.500 4.300l1.500.300-.700 3.600-1.500-.300z" fill="#f0641e"/>
<path d="M16.600 8.800l1.600.300-.700 3-1.600-.300z" fill="#ecd21c"/>
<path d="M15.600 12.800l1.600.300-.700 3.300-1.600-.300z" fill="#3fb52a"/></svg>
<div class="t" style="top:514px;font-size:12.5px;line-height:14px;color:#eef2f6;letter-spacing:0.33px;left:440.64px;">Facturas</div>
<div class="t" style="top:528px;font-size:12.5px;line-height:14px;color:#eef2f6;letter-spacing:0.31px;left:421.84px;">de compra</div>
<svg style="left:625.5px;top:502px" width="10.2" height="9.93" viewBox="0 0 19 18.500"><path d="M.100 12.500l14.900 3.800-.300 2.100-14.100-4.400z" fill="#ececec"/>
<path d="M.100 12.500l14.900 3.800-.100.800-14.900-3.900z" fill="#bdbdbd"/>
<path d="M6 0l11.900 1.900-2.900 14.400-14.900-3.800z" fill="#b2b2b2"/>
<path d="M6 0l11.900 1.900-.700 3.500-12.600-2.700z" fill="#c2c2c2"/>
<path d="M8.100 3.500l5.800.900-.300 2-5.700-.900z" fill="#e4e4e4"/>
<path d="M17.500 4.300l1.500.300-.700 3.600-1.500-.300z" fill="#f0641e"/>
<path d="M16.600 8.800l1.600.300-.700 3-1.600-.300z" fill="#ecd21c"/>
<path d="M15.600 12.800l1.600.300-.700 3.300-1.600-.300z" fill="#3fb52a"/></svg>
<div class="t" style="top:514px;font-size:12.5px;line-height:14px;color:#eef2f6;letter-spacing:0.15px;left:586.74px;">Presupuestos</div>
<div class="t" style="top:528px;font-size:12.5px;line-height:14px;color:#eef2f6;letter-spacing:-0.01px;left:591.34px;">desglosados</div>
<div class="t" style="top:542px;font-size:12.5px;line-height:14px;color:#eef2f6;letter-spacing:0.45px;left:597.94px;">de venta</div>
<svg style="left:694px;top:510px" width="10.2" height="9.93" viewBox="0 0 19 18.500"><path d="M.100 12.500l14.900 3.800-.300 2.100-14.100-4.400z" fill="#ececec"/>
<path d="M.100 12.500l14.900 3.800-.100.800-14.900-3.900z" fill="#bdbdbd"/>
<path d="M6 0l11.900 1.900-2.900 14.400-14.900-3.800z" fill="#b2b2b2"/>
<path d="M6 0l11.900 1.900-.700 3.500-12.600-2.700z" fill="#c2c2c2"/>
<path d="M8.100 3.500l5.800.900-.300 2-5.700-.900z" fill="#e4e4e4"/>
<path d="M17.500 4.300l1.500.300-.700 3.600-1.500-.300z" fill="#f0641e"/>
<path d="M16.600 8.800l1.600.300-.700 3-1.600-.300z" fill="#ecd21c"/>
<path d="M15.600 12.800l1.600.300-.700 3.300-1.600-.300z" fill="#3fb52a"/></svg>
<div class="t" style="top:507px;font-size:12.5px;line-height:14px;color:#eef2f6;letter-spacing:-0.01px;left:707.74px;">Pedidos</div>
<div class="t" style="top:521px;font-size:12.5px;line-height:14px;color:#eef2f6;letter-spacing:0.03px;left:684.04px;">desglosados</div>
<div class="t" style="top:535px;font-size:12.5px;line-height:14px;color:#eef2f6;letter-spacing:0.49px;left:690.94px;">de venta</div>
<svg style="left:780.8px;top:516px" width="10.2" height="9.93" viewBox="0 0 19 18.500"><path d="M.100 12.500l14.900 3.800-.300 2.100-14.100-4.400z" fill="#ececec"/>
<path d="M.100 12.500l14.900 3.800-.100.800-14.900-3.900z" fill="#bdbdbd"/>
<path d="M6 0l11.900 1.900-2.900 14.400-14.900-3.800z" fill="#b2b2b2"/>
<path d="M6 0l11.900 1.900-.700 3.500-12.600-2.700z" fill="#c2c2c2"/>
<path d="M8.100 3.500l5.800.900-.300 2-5.700-.900z" fill="#e4e4e4"/>
<path d="M17.500 4.300l1.500.300-.700 3.600-1.500-.300z" fill="#f0641e"/>
<path d="M16.600 8.800l1.600.300-.700 3-1.600-.300z" fill="#ecd21c"/>
<path d="M15.600 12.800l1.600.300-.700 3.300-1.600-.300z" fill="#3fb52a"/></svg>
<div class="t" style="top:514px;font-size:12.5px;line-height:14px;color:#eef2f6;letter-spacing:0.19px;left:793.74px;">Albaranes</div>
<div class="t" style="top:528px;font-size:12.5px;line-height:14px;color:#eef2f6;letter-spacing:0.49px;left:783.84px;">de venta</div>
<svg style="left:877.7px;top:516px" width="10.2" height="9.93" viewBox="0 0 19 18.500"><path d="M.100 12.500l14.900 3.800-.300 2.100-14.100-4.400z" fill="#ececec"/>
<path d="M.100 12.500l14.900 3.800-.100.800-14.900-3.900z" fill="#bdbdbd"/>
<path d="M6 0l11.900 1.900-2.900 14.400-14.900-3.800z" fill="#b2b2b2"/>
<path d="M6 0l11.900 1.900-.700 3.500-12.600-2.700z" fill="#c2c2c2"/>
<path d="M8.100 3.500l5.800.900-.300 2-5.700-.900z" fill="#e4e4e4"/>
<path d="M17.500 4.300l1.500.300-.700 3.600-1.500-.300z" fill="#f0641e"/>
<path d="M16.600 8.800l1.600.300-.700 3-1.600-.300z" fill="#ecd21c"/>
<path d="M15.600 12.800l1.600.300-.700 3.300-1.600-.300z" fill="#3fb52a"/></svg>
<div class="t" style="top:514px;font-size:12.5px;line-height:14px;color:#eef2f6;letter-spacing:0.33px;left:891.84px;">Facturas</div>
<div class="t" style="top:528px;font-size:12.5px;line-height:14px;color:#eef2f6;letter-spacing:0.45px;left:878.14px;">de venta</div>
<svg style="left:999px;top:509px" width="10.2" height="9.93" viewBox="0 0 19 18.500"><path d="M.100 12.500l14.900 3.800-.300 2.100-14.100-4.400z" fill="#ececec"/>
<path d="M.100 12.500l14.900 3.800-.100.800-14.900-3.900z" fill="#bdbdbd"/>
<path d="M6 0l11.900 1.900-2.900 14.400-14.900-3.800z" fill="#b2b2b2"/>
<path d="M6 0l11.900 1.900-.700 3.500-12.600-2.700z" fill="#c2c2c2"/>
<path d="M8.100 3.500l5.800.900-.300 2-5.700-.900z" fill="#e4e4e4"/>
<path d="M17.500 4.300l1.500.300-.700 3.600-1.500-.300z" fill="#f0641e"/>
<path d="M16.600 8.800l1.600.300-.700 3-1.600-.300z" fill="#ecd21c"/>
<path d="M15.600 12.800l1.600.300-.700 3.300-1.600-.300z" fill="#3fb52a"/></svg>
<div class="t" style="top:521px;font-size:12.5px;line-height:14px;color:#eef2f6;letter-spacing:0.15px;left:960.24px;">Facturaciones</div>
<div class="t" style="top:535px;font-size:12.5px;line-height:14px;color:#eef2f6;letter-spacing:0.14px;left:969.14px;">periódicas</div>
<div class="b" style="left:12px;top:563px;width:1534px;height:28px;background:#b5093a;border-radius:14px;"></div>
<svg style="left:33px;top:565px" width="19" height="18.5" viewBox="0 0 19 18.500"><path d="M.100 12.500l14.900 3.800-.300 2.100-14.100-4.400z" fill="#ececec"/>
<path d="M.100 12.500l14.900 3.800-.100.800-14.900-3.900z" fill="#bdbdbd"/>
<path d="M6 0l11.900 1.900-2.900 14.400-14.900-3.800z" fill="#999"/>
<path d="M6 0l11.900 1.900-.700 3.500-12.600-2.700z" fill="#a6a6a6"/>
<path d="M8.100 3.500l5.800.900-.300 2-5.700-.900z" fill="#e4e4e4"/>
<path d="M17.500 4.300l1.500.300-.700 3.600-1.500-.300z" fill="#f0641e"/>
<path d="M16.600 8.800l1.600.300-.700 3-1.600-.300z" fill="#ecd21c"/>
<path d="M15.600 12.800l1.600.300-.700 3.300-1.600-.300z" fill="#3fb52a"/></svg>
<div class="t" style="top:567px;font-size:20px;line-height:22px;font-weight:bold;color:#f1efec;letter-spacing:-0.85px;left:58.1px;">Presupuestos de compra</div>
<div class="t" style="top:573px;font-size:13px;line-height:15px;color:#fff;letter-spacing:0.07px;left:302.92px;">Cantidad de registros: 3</div>
<svg style="left:21px;top:595.7px" width="11" height="11" viewBox="0 0 11 11"><defs><linearGradient id="pg" x1="0" y1="0" x2="0" y2="1"><stop offset="0" stop-color="#74c63a"/><stop offset="1" stop-color="#3f9a14"/></linearGradient></defs><path d="M3.800 0h3.400v3.800h3.800v3.400h-3.800v3.800h-3.400v-3.800h-3.800v-3.400h3.800z" fill="url(#pg)"/></svg>
<div class="t" style="top:596px;font-size:10.67px;line-height:12px;letter-spacing:-0.02px;left:34.92px;">Crear</div>
<svg style="left:118.3px;top:596px" width="11" height="10.5" viewBox="0 0 11 10.5"><path d="M6.400 2A3.100 3.100 0 1 1 3.600 6.600" fill="none" stroke="#4aa512" stroke-width="2.300"/><path d="M3 2.200l2.500 3.800-5.300.300z" fill="#4aa512"/></svg>
<div class="t" style="top:596px;font-size:10.67px;line-height:12px;letter-spacing:0.08px;left:131.72px;">Actualizar</div>
<div class="t" style="top:596px;font-size:10.67px;line-height:12px;letter-spacing:-0.14px;left:1229.52px;">Buscar</div>
<div class="b" style="left:1264px;top:593px;width:140px;height:18px;border:1px solid #c9c9c9;border-radius:4px;background:#fff"></div>
<svg style="left:1443px;top:596px" width="11" height="11" viewBox="0 0 11 11"><path d="M.3 .500h10.400l-4 4.500v5.500l-2.400-1.500v-4z" fill="#8fa6bf" stroke="#6f86a0" stroke-width=".5"/><path d="M1.500 1.200h8" stroke="#c9d6e4" stroke-width=".8"/></svg>
<div class="t" style="top:596px;font-size:10.67px;line-height:12px;letter-spacing:0.37px;left:1456.52px;">Filtrar</div>
<svg style="left:1558px;top:563px" width="9" height="6" viewBox="0 0 9 6"><path d="M0 5.500l4.500-5 4.500 5z" fill="#a9a9a9"/></svg>
<div class="b" style="left:1556.5px;top:572.6px;width:12.4px;height:111.6px;background:linear-gradient(90deg,#a2a2a2,#b9b9b9 20%,#b4b4b4 80%,#9e9e9e);"></div>
<div class="b" style="left:12.4px;top:616px;width:1541.3999999999999px;height:21px;background:linear-gradient(#fdfdfd,#f4f4f6 50%,#e7e7eb);border-top:1.5px solid #b5093a;border-bottom:1px solid #cfcfd4;"></div>
<div class="b" style="left:11.8px;top:616px;width:1px;height:105px;background:#b5093a;"></div>
<div class="b" style="left:119.0px;top:618px;width:1px;height:18.5px;background:#c9c9ce;"></div>
<div class="b" style="left:213.9px;top:618px;width:1px;height:18.5px;background:#c9c9ce;"></div>
<div class="b" style="left:306.9px;top:618px;width:1px;height:18.5px;background:#c9c9ce;"></div>
<div class="b" style="left:408.1px;top:618px;width:1px;height:18.5px;background:#c9c9ce;"></div>
<div class="b" style="left:507.2px;top:618px;width:1px;height:18.5px;background:#c9c9ce;"></div>
<div class="b" style="left:630.2px;top:618px;width:1px;height:18.5px;background:#c9c9ce;"></div>
<div class="b" style="left:734.0px;top:618px;width:1px;height:18.5px;background:#c9c9ce;"></div>
<div class="b" style="left:825.0px;top:618px;width:1px;height:18.5px;background:#c9c9ce;"></div>
<div class="b" style="left:879.1px;top:618px;width:1px;height:18.5px;background:#c9c9ce;"></div>
<div class="b" style="left:971.1px;top:618px;width:1px;height:18.5px;background:#c9c9ce;"></div>
<div class="b" style="left:1094.1px;top:618px;width:1px;height:18.5px;background:#c9c9ce;"></div>
<div class="b" style="left:1155.0px;top:618px;width:1px;height:18.5px;background:#c9c9ce;"></div>
<div class="b" style="left:1233.9px;top:618px;width:1px;height:18.5px;background:#c9c9ce;"></div>
<div class="b" style="left:1289.8px;top:618px;width:1px;height:18.5px;background:#c9c9ce;"></div>
<div class="b" style="left:1334.1px;top:618px;width:1px;height:18.5px;background:#c9c9ce;"></div>
<div class="b" style="left:1402.0px;top:618px;width:1px;height:18.5px;background:#c9c9ce;"></div>
<div class="b" style="left:1433.0px;top:618px;width:1px;height:18.5px;background:#c9c9ce;"></div>
<div class="b" style="left:1486.2px;top:618px;width:1px;height:18.5px;background:#c9c9ce;"></div>
<div class="b" style="left:12.8px;top:637px;width:1540.9999999999998px;height:21px;background:#eeeff3;"></div>
<div class="b" style="left:12.8px;top:658px;width:1540.9999999999998px;height:21px;background:#f6f6f6;"></div>
<div class="b" style="left:12.8px;top:679px;width:1540.9999999999998px;height:21px;background:#eeeff3;"></div>
<div class="b" style="left:11.8px;top:700px;width:1541.9999999999998px;height:21px;background:#b5093a;"></div>
<div class="t" style="top:622px;font-size:9px;line-height:10px;color:#2b2b2b;letter-spacing:-0.56px;left:48.59px;">Columnas</div>
<svg style="left:120px;top:617.900px" width="12" height="11.500" viewBox="0 0 12 11"><rect width="12" height="11" fill="#9c9c9c"/><path d="M2.500 5.500l2.500 3 4.500-6.500" fill="none" stroke="#fff" stroke-width="1.600"/></svg>
<div class="t" style="top:622px;font-size:10.67px;line-height:12px;color:#2b2b2b;letter-spacing:0.22px;left:224.92px;">Número Oferta</div>
<div class="t" style="top:622px;font-size:10.67px;line-height:12px;color:#2b2b2b;letter-spacing:0.07px;left:330.42px;">Descripción</div>
<div class="t" style="top:622px;font-size:10.67px;line-height:12px;color:#2b2b2b;left:415.52px;">Código Proveedor</div>
<div class="t" style="top:622px;font-size:10.67px;line-height:12px;color:#2b2b2b;letter-spacing:0.08px;left:527.82px;">Nombre empresa</div>
<div class="t" style="top:622px;font-size:10.67px;line-height:12px;color:#2b2b2b;letter-spacing:-0.13px;left:637.92px;">Fecha Presupuesto</div>
<div class="t" style="top:622px;font-size:10.67px;line-height:12px;color:#2b2b2b;letter-spacing:-0.07px;left:741.62px;">Fecha recepción</div>
<div class="t" style="top:622px;font-size:10.67px;line-height:12px;color:#2b2b2b;letter-spacing:-0.11px;left:836.72px;">Estado</div>
<div class="t" style="top:622px;font-size:10.67px;line-height:12px;color:#2b2b2b;letter-spacing:0.13px;left:888.12px;">Número Pedido</div>
<div class="t" style="top:622px;font-size:10.67px;line-height:12px;color:#2b2b2b;letter-spacing:0.15px;left:978.82px;">Número pedido cliente</div>
<div class="t" style="top:622px;font-size:10.67px;line-height:12px;color:#2b2b2b;letter-spacing:-0.17px;left:1101.82px;">En Pedido</div>
<div class="t" style="top:622px;font-size:10.67px;line-height:12px;color:#2b2b2b;letter-spacing:0.01px;left:1162.72px;">Desc. Artículo</div>
<div class="t" style="top:622px;font-size:10.67px;line-height:12px;color:#2b2b2b;letter-spacing:0.09px;left:1241.22px;">Cantidad</div>
<div class="t" style="top:622px;font-size:10.67px;line-height:12px;color:#2b2b2b;letter-spacing:0.15px;left:1297.52px;">Precio</div>
<div class="t" style="top:622px;font-size:10.67px;line-height:12px;color:#2b2b2b;letter-spacing:0.04px;left:1341.52px;">Tipo de IVA</div>
<div class="t" style="top:622px;font-size:10.67px;line-height:12px;color:#2b2b2b;letter-spacing:0.48px;left:1409.72px;">Dto</div>
<div class="t" style="top:622px;font-size:10.67px;line-height:12px;color:#2b2b2b;letter-spacing:0.52px;left:1440.62px;">Importe</div>
<div class="t" style="top:622px;font-size:10.67px;line-height:12px;color:#2b2b2b;letter-spacing:-0.04px;left:1493.22px;">Cantidad ser</div>
<svg style="left:20.5px;top:638px" width="15" height="14.61" viewBox="0 0 19 18.500"><path d="M.100 12.500l14.900 3.800-.300 2.100-14.100-4.400z" fill="#ececec"/>
<path d="M.100 12.500l14.900 3.800-.100.800-14.900-3.900z" fill="#bdbdbd"/>
<path d="M6 0l11.900 1.900-2.900 14.400-14.900-3.800z" fill="#868686"/>
<path d="M6 0l11.900 1.900-.700 3.500-12.600-2.700z" fill="#9a9a9a"/>
<path d="M8.100 3.500l5.800.900-.300 2-5.700-.900z" fill="#e4e4e4"/>
<path d="M17.500 4.300l1.500.300-.700 3.600-1.500-.300z" fill="#f0641e"/>
<path d="M16.600 8.800l1.600.300-.700 3-1.600-.300z" fill="#ecd21c"/>
<path d="M15.600 12.800l1.600.300-.700 3.300-1.600-.300z" fill="#3fb52a"/></svg>
<div class="b" style="left:39px;top:642.7px;width:38px;height:15.3px;background:#b5093a;border-radius:5px 5px 4px 4px;"></div>
<div class="t" style="top:644px;font-size:10.67px;line-height:12px;color:#fff;letter-spacing:-0.58px;left:45.42px;-webkit-text-stroke:.3px #fff;">Editar</div>
<div class="b" style="left:81.3px;top:642.7px;width:36.5px;height:15.3px;background:#c7c7c7;border-radius:5px 5px 4px 4px;"></div>
<div class="t" style="top:644px;font-size:10.67px;line-height:12px;color:#f0f0f0;letter-spacing:-0.79px;left:82.72px;">Eliminar</div>
<div class="b" style="left:123px;top:641.9px;width:10px;height:10px;border:1px solid #b4b4b4;border-radius:2.500px;background:linear-gradient(#f4f4f4,#dcdcdc)"></div>
<div class="b" style="left:139.800px;top:639.9px;width:73px;height:17.700px;border:1.500px solid #1d3a6b;border-radius:4.500px;background:#fff"></div>
<div class="t" style="top:642px;font-size:12px;line-height:14px;letter-spacing:-0.28px;left:144.26px;">10</div>
<div class="t" style="top:641px;font-size:10.67px;line-height:12px;letter-spacing:-0.05px;left:219.42px;">PRC/000003/2013</div>
<div class="t" style="top:641px;font-size:10.67px;line-height:12px;letter-spacing:0.11px;left:312.02px;">Compra de mateiral</div>
<div class="t" style="top:641px;font-size:10.67px;line-height:12px;letter-spacing:0.10px;right:1066.42px;">62</div>
<div class="t" style="top:641px;font-size:10.67px;line-height:12px;letter-spacing:-1.06px;left:512.02px;">ARSUS</div>
<div class="t" style="top:641px;font-size:10.67px;line-height:12px;letter-spacing:0.37px;left:635.22px;">21/12/2013</div>
<div class="t" style="top:641px;font-size:10.67px;line-height:12px;letter-spacing:0.18px;left:830.02px;">Pendiente</div>
<svg style="left:1120.3px;top:639.6px" width="12" height="12" viewBox="0 0 12 12"><path d="M1.500 1.200l9 9.500M10.300 1l-8.800 10" stroke="#e0201a" stroke-width="2.600" stroke-linecap="round"/></svg>
<div class="t" style="top:641px;font-size:10.67px;line-height:12px;letter-spacing:0.80px;right:282.72px;">10</div>
<div class="t" style="top:641px;font-size:10.67px;line-height:12px;letter-spacing:0.15px;right:239.37px;">89,95</div>
<div class="t" style="top:641px;font-size:10.67px;line-height:12px;letter-spacing:0.17px;right:140.55px;">6,95</div>
<div class="t" style="top:641px;font-size:10.67px;line-height:12px;letter-spacing:0.19px;right:87.33px;">694,93</div>
<svg style="left:20.5px;top:659px" width="15" height="14.61" viewBox="0 0 19 18.500"><path d="M.100 12.500l14.900 3.800-.300 2.100-14.100-4.400z" fill="#ececec"/>
<path d="M.100 12.500l14.900 3.800-.100.800-14.900-3.900z" fill="#bdbdbd"/>
<path d="M6 0l11.900 1.900-2.900 14.400-14.900-3.800z" fill="#868686"/>
<path d="M6 0l11.900 1.900-.700 3.500-12.600-2.700z" fill="#9a9a9a"/>
<path d="M8.100 3.500l5.800.900-.300 2-5.700-.900z" fill="#e4e4e4"/>
<path d="M17.500 4.300l1.500.300-.700 3.600-1.500-.300z" fill="#f0641e"/>
<path d="M16.600 8.800l1.600.300-.700 3-1.600-.300z" fill="#ecd21c"/>
<path d="M15.600 12.800l1.600.300-.700 3.300-1.600-.300z" fill="#3fb52a"/></svg>
<div class="b" style="left:39px;top:663.7px;width:38px;height:15.3px;background:#b5093a;border-radius:5px 5px 4px 4px;"></div>
<div class="t" style="top:665px;font-size:10.67px;line-height:12px;color:#fff;letter-spacing:-0.58px;left:45.42px;-webkit-text-stroke:.3px #fff;">Editar</div>
<div class="b" style="left:81.3px;top:663.7px;width:36.5px;height:15.3px;background:#c7c7c7;border-radius:5px 5px 4px 4px;"></div>
<div class="t" style="top:665px;font-size:10.67px;line-height:12px;color:#f0f0f0;letter-spacing:-0.79px;left:82.72px;">Eliminar</div>
<div class="b" style="left:123px;top:662.9px;width:10px;height:10px;border:1px solid #b4b4b4;border-radius:2.500px;background:linear-gradient(#f4f4f4,#dcdcdc)"></div>
<div class="b" style="left:139.800px;top:660.9px;width:73px;height:17.700px;border:1.500px solid #1d3a6b;border-radius:4.500px;background:#fff"></div>
<div class="t" style="top:663px;font-size:12px;line-height:14px;letter-spacing:-0.28px;left:144.26px;">10</div>
<div class="t" style="top:662px;font-size:10.67px;line-height:12px;letter-spacing:-0.05px;left:219.42px;">PRC/000002/2013</div>
<div class="t" style="top:662px;font-size:10.67px;line-height:12px;letter-spacing:0.16px;left:312.02px;">Compra informática</div>
<div class="t" style="top:662px;font-size:10.67px;line-height:12px;letter-spacing:0.02px;right:1066.5px;">7</div>
<div class="t" style="top:662px;font-size:10.67px;line-height:12px;letter-spacing:0.05px;left:512.02px;">Distribuciones Ibérica 21</div>
<div class="t" style="top:662px;font-size:10.67px;line-height:12px;letter-spacing:0.37px;left:635.22px;">09/12/2013</div>
<div class="t" style="top:662px;font-size:10.67px;line-height:12px;letter-spacing:0.18px;left:830.02px;">Pendiente</div>
<div class="t" style="top:662px;font-size:10.67px;line-height:12px;letter-spacing:-0.01px;left:884.12px;">PEC/000004/2013</div>
<svg style="left:1118.9px;top:659.9px" width="15" height="14" viewBox="0 0 15 14"><path d="M1.500 8.500l4 4 8-11" fill="none" stroke="#5cb514" stroke-width="2.800" stroke-linecap="round" stroke-linejoin="round"/></svg>
<div class="t" style="top:662px;font-size:10.67px;line-height:12px;letter-spacing:0.80px;right:282.72px;">10</div>
<div class="t" style="top:662px;font-size:10.67px;line-height:12px;letter-spacing:0.15px;right:239.37px;">62,00</div>
<div class="t" style="top:662px;font-size:10.67px;line-height:12px;letter-spacing:0.17px;right:140.55px;">6,95</div>
<div class="t" style="top:662px;font-size:10.67px;line-height:12px;letter-spacing:0.19px;right:87.33px;">694,93</div>
<svg style="left:20.5px;top:680px" width="15" height="14.61" viewBox="0 0 19 18.500"><path d="M.100 12.500l14.900 3.800-.300 2.100-14.100-4.400z" fill="#ececec"/>
<path d="M.100 12.500l14.900 3.800-.100.800-14.900-3.900z" fill="#bdbdbd"/>
<path d="M6 0l11.900 1.900-2.900 14.400-14.900-3.800z" fill="#868686"/>
<path d="M6 0l11.900 1.900-.700 3.500-12.600-2.700z" fill="#9a9a9a"/>
<path d="M8.100 3.500l5.800.900-.300 2-5.700-.900z" fill="#e4e4e4"/>
<path d="M17.500 4.300l1.500.300-.700 3.600-1.500-.300z" fill="#f0641e"/>
<path d="M16.600 8.800l1.600.300-.700 3-1.600-.300z" fill="#ecd21c"/>
<path d="M15.600 12.800l1.600.300-.700 3.300-1.600-.300z" fill="#3fb52a"/></svg>
<div class="b" style="left:39px;top:684.7px;width:38px;height:15.3px;background:#b5093a;border-radius:5px 5px 4px 4px;"></div>
<div class="t" style="top:686px;font-size:10.67px;line-height:12px;color:#fff;letter-spacing:-0.58px;left:45.42px;-webkit-text-stroke:.3px #fff;">Editar</div>
<div class="b" style="left:81.3px;top:684.7px;width:36.5px;height:15.3px;background:#c7c7c7;border-radius:5px 5px 4px 4px;"></div>
<div class="t" style="top:686px;font-size:10.67px;line-height:12px;color:#f0f0f0;letter-spacing:-0.79px;left:82.72px;">Eliminar</div>
<div class="b" style="left:123px;top:683.9px;width:10px;height:10px;border:1px solid #b4b4b4;border-radius:2.500px;background:linear-gradient(#f4f4f4,#dcdcdc)"></div>
<div class="b" style="left:139.800px;top:681.9px;width:73px;height:17.700px;border:1.500px solid #1d3a6b;border-radius:4.500px;background:#fff"></div>
<div class="t" style="top:684px;font-size:12px;line-height:14px;letter-spacing:-0.28px;left:144.26px;">10</div>
<div class="t" style="top:683px;font-size:10.67px;line-height:12px;letter-spacing:-0.05px;left:219.42px;">PRC/000001/2013</div>
<div class="t" style="top:683px;font-size:10.67px;line-height:12px;letter-spacing:0.11px;left:312.02px;">Compra de material</div>
<div class="t" style="top:683px;font-size:10.67px;line-height:12px;letter-spacing:0.10px;right:1066.42px;">58</div>
<div class="t" style="top:683px;font-size:10.67px;line-height:12px;letter-spacing:-0.12px;left:512.02px;">Distribuciones MATE SL</div>
<div class="t" style="top:683px;font-size:10.67px;line-height:12px;letter-spacing:0.37px;left:635.22px;">03/12/2013</div>
<div class="t" style="top:683px;font-size:10.67px;line-height:12px;letter-spacing:0.18px;left:830.02px;">Pendiente</div>
<div class="t" style="top:683px;font-size:10.67px;line-height:12px;letter-spacing:-0.01px;left:884.12px;">PEC/000003/2013</div>
<svg style="left:1118.9px;top:680.9px" width="15" height="14" viewBox="0 0 15 14"><path d="M1.500 8.500l4 4 8-11" fill="none" stroke="#5cb514" stroke-width="2.800" stroke-linecap="round" stroke-linejoin="round"/></svg>
<div class="t" style="top:683px;font-size:10.67px;line-height:12px;letter-spacing:0.80px;right:282.72px;">10</div>
<div class="t" style="top:683px;font-size:10.67px;line-height:12px;letter-spacing:0.15px;right:239.37px;">69,50</div>
<div class="t" style="top:683px;font-size:10.67px;line-height:12px;letter-spacing:0.17px;right:140.55px;">6,95</div>
<div class="t" style="top:683px;font-size:10.67px;line-height:12px;letter-spacing:0.19px;right:87.33px;">694,93</div>
<div class="t" style="top:704px;font-size:10.67px;line-height:12px;font-weight:bold;color:#fff;letter-spacing:0.22px;right:283.3px;">30,00</div>
<div class="t" style="top:704px;font-size:10.67px;line-height:12px;font-weight:bold;color:#fff;letter-spacing:0.10px;right:87.42px;">2.084,79</div>
</div>
</body>
</html>
